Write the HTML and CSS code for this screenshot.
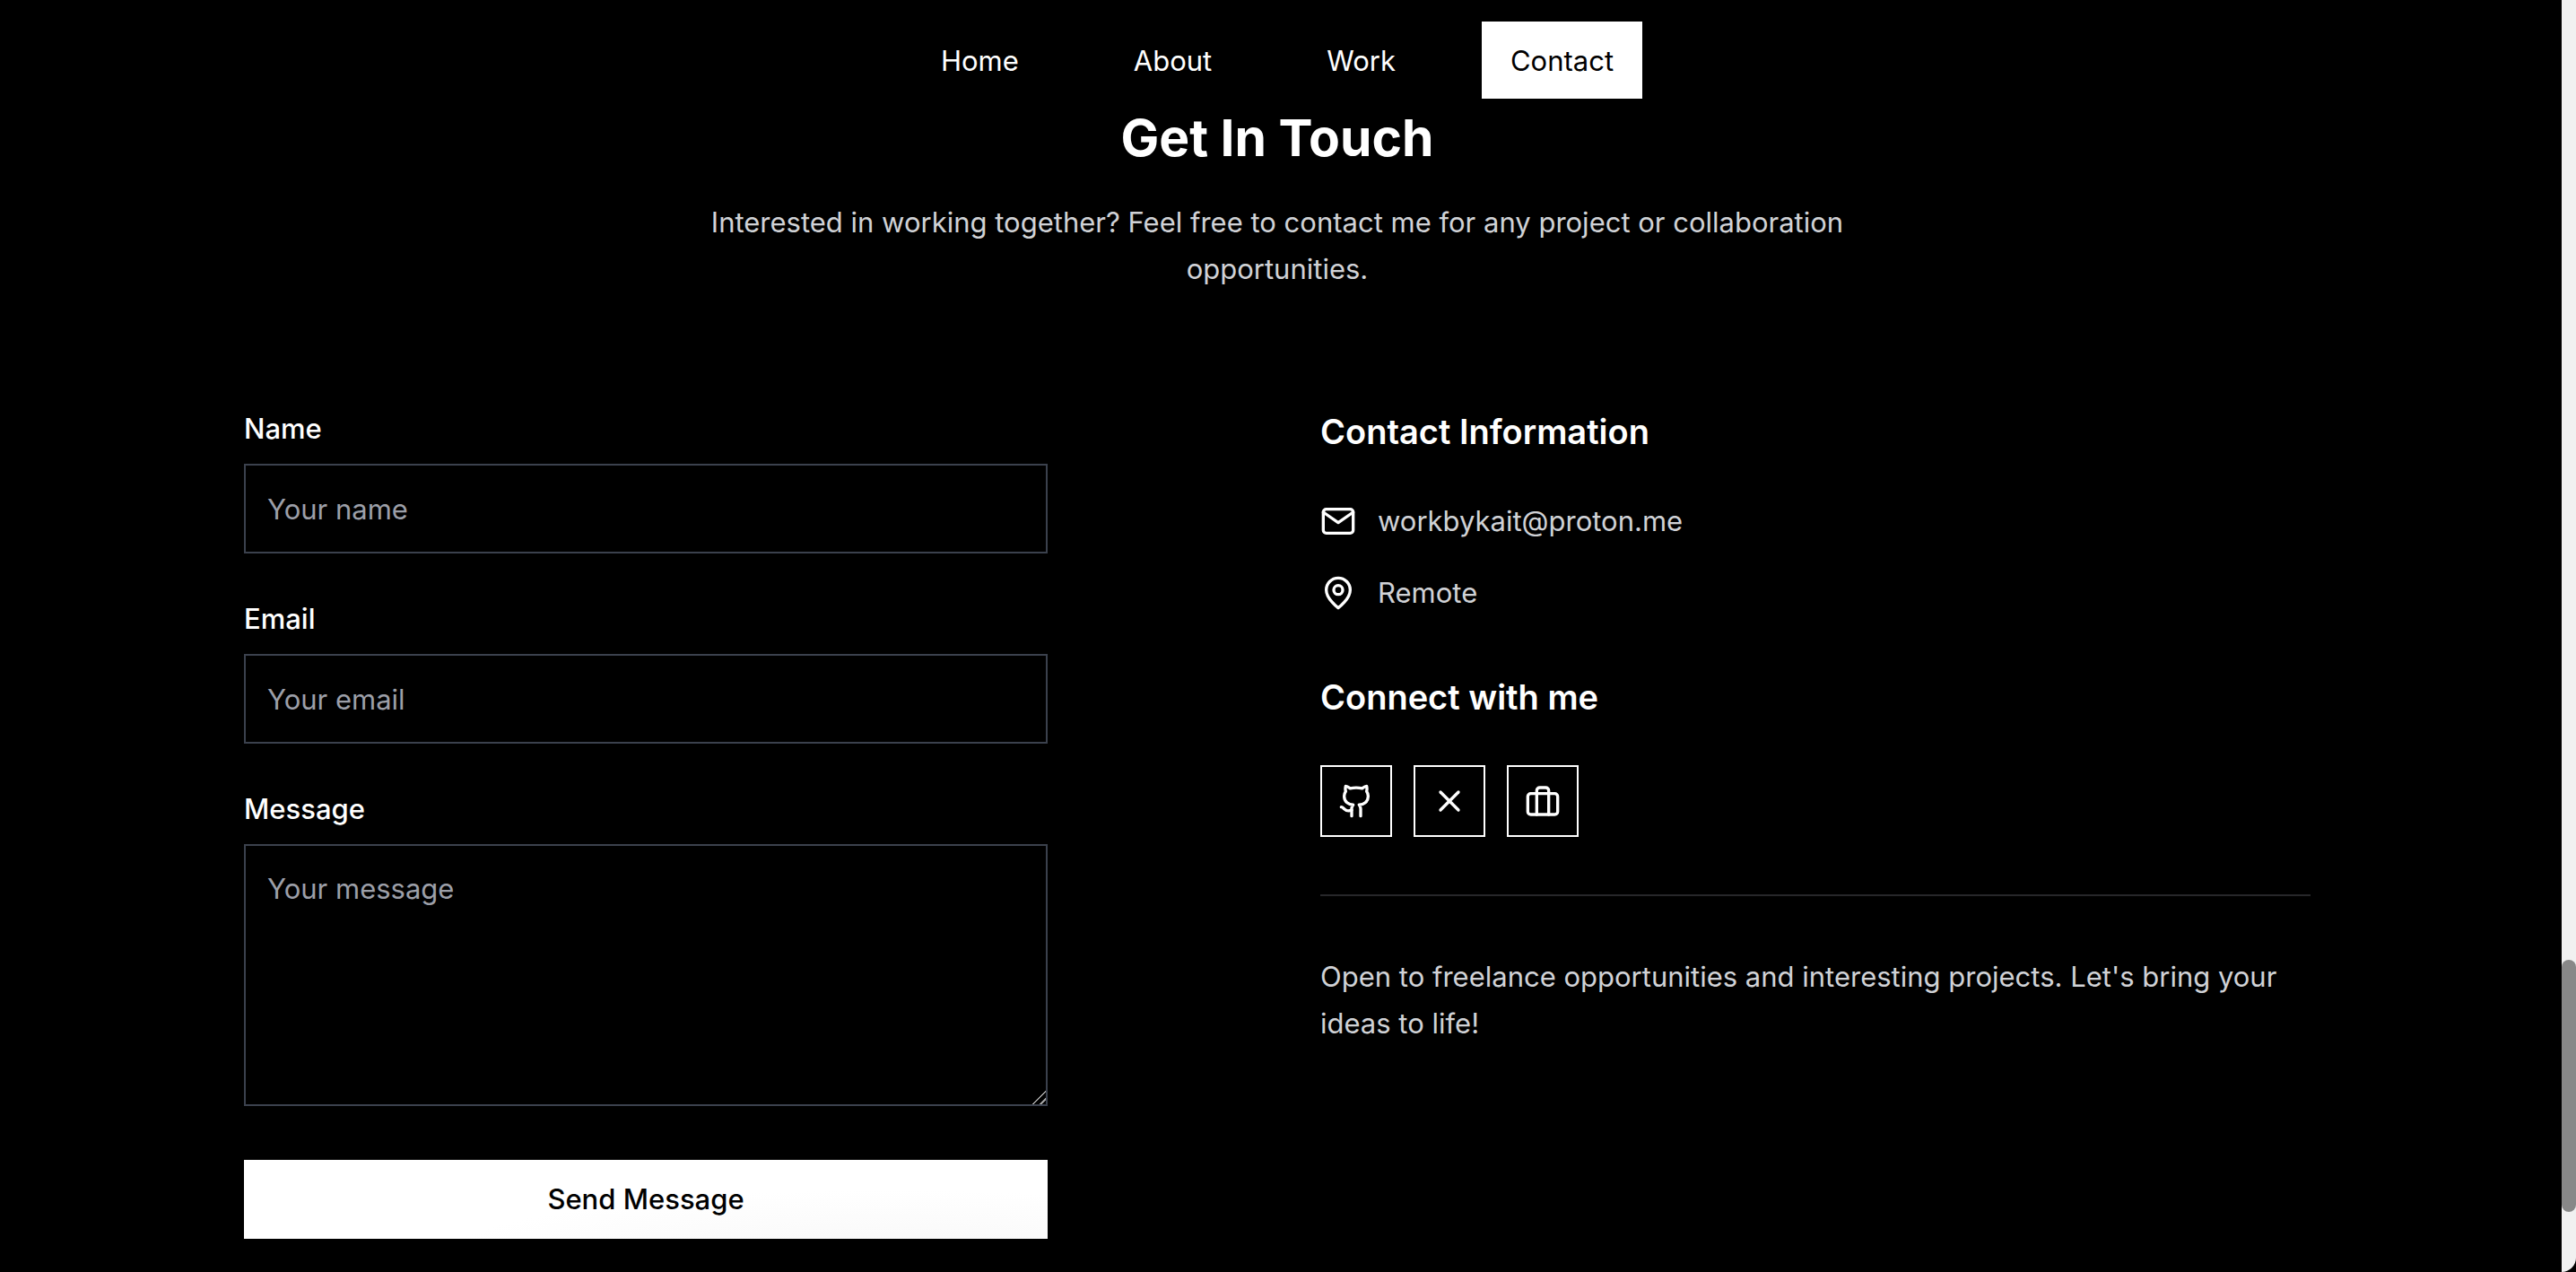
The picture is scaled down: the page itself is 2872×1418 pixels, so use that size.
FILE: index.html
```
<!DOCTYPE html>
<html lang="en">

<head>
    <meta charset="UTF-8">
    <meta name="viewport" content="width=device-width, initial-scale=1.0">
    <title>Contact</title>
    <link rel="stylesheet" href="styles.css">
</head>

<body>
    <div class="page">
        <header>
            <nav>
                <ul>
                    <li><a href="#home">Home</a></li>
                    <li><a href="#about">About</a></li>
                    <li><a href="#work">Work</a></li>
                    <li><a href="#contact" class="active">Contact</a></li>
                </ul>
            </nav>
        </header>

        <main class="contact" id="contact">
            <div class="intro">
                <h1>Get In Touch</h1>
                <p>Interested in working together? Feel free to contact me for any project or collaboration opportunities.</p>
            </div>

            <div class="columns">
                <form class="contact-form">
                    <div class="field">
                        <label for="name">Name</label>
                        <input type="text" id="name" name="name" placeholder="Your name">
                    </div>
                    <div class="field">
                        <label for="email">Email</label>
                        <input type="email" id="email" name="email" placeholder="Your email">
                    </div>
                    <div class="field">
                        <label for="message">Message</label>
                        <textarea id="message" name="message" rows="5" placeholder="Your message"></textarea>
                    </div>
                    <button type="submit" class="send-btn">Send Message</button>
                </form>

                <div class="info">
                    <h2>Contact Information</h2>
                    <ul class="details">
                        <li>
                            <svg class="icon" viewBox="0 0 24 24">
                                <rect x="2" y="4" width="20" height="16" rx="2" />
                                <path d="M22 6l-10 7L2 6" />
                            </svg>
                            <span>workbykait@proton.me</span>
                        </li>
                        <li>
                            <svg class="icon" viewBox="0 0 24 24">
                                <path d="M20 10c0 6-8 12-8 12s-8-6-8-12a8 8 0 0 1 16 0Z" />
                                <circle cx="12" cy="10" r="3" />
                            </svg>
                            <span>Remote</span>
                        </li>
                    </ul>

                    <h2>Connect with me</h2>
                    <div class="social">
                        <a href="#github" aria-label="GitHub">
                            <svg class="icon" viewBox="0 0 24 24">
                                <path d="M15 22v-4a4.8 4.8 0 0 0-1-3.5c3 0 6-2 6-5.5.08-1.25-.27-2.48-1-3.5.28-1.15.28-2.35 0-3.5 0 0-1 0-3 1.5-2.64-.5-5.36-.5-8 0C6 2 5 2 5 2c-.3 1.15-.3 2.35 0 3.5A5.403 5.403 0 0 0 4 9c0 3.5 3 5.5 6 5.5-.39.49-.68 1.05-.85 1.65-.17.6-.22 1.23-.15 1.85v4" />
                                <path d="M9 18c-4.51 2-5-2-7-2" />
                            </svg>
                        </a>
                        <a href="#x" aria-label="X">
                            <svg class="icon" viewBox="0 0 24 24">
                                <path d="M18 6L6 18" />
                                <path d="M6 6l12 12" />
                            </svg>
                        </a>
                        <a href="#portfolio" aria-label="Portfolio">
                            <svg class="icon" viewBox="0 0 24 24">
                                <rect x="2" y="7" width="20" height="14" rx="2" />
                                <path d="M16 21V5a2 2 0 0 0-2-2h-4a2 2 0 0 0-2 2v16" />
                            </svg>
                        </a>
                    </div>

                    <p class="note">Open to freelance opportunities and interesting projects. Let's bring your ideas to life!</p>
                </div>
            </div>
        </main>
    </div>

    <div class="scrollbar">
        <div class="thumb"></div>
    </div>
</body>

</html>
```

FILE: styles.css
```
* {
    margin: 0;
    padding: 0;
    box-sizing: border-box;
}
body {
    display: flex;
    min-height: 100vh;
    background-color: #000;
    color: white;
    font-family: Inter, "Liberation Sans", sans-serif;
    font-size: 31px;
    line-height: 52px;
}
ul {
    list-style: none;
}
.page {
    flex: 1;
    padding: 24px 8px 32px 0;
}

/* navigation */
nav ul {
    display: flex;
    justify-content: center;
    gap: 64px;
}
nav a {
    display: block;
    padding: 18px 32px 16px;
    color: white;
    text-decoration: none;
}
nav a.active {
    background-color: white;
    color: black;
}

/* contact section */
.contact {
    max-width: 2304px;
    margin: 8px auto 0;
}
.intro {
    max-width: 1344px;
    margin: 0 auto 127px;
    text-align: center;
}
.intro h1 {
    margin-bottom: 32px;
    font-size: 57px;
    font-weight: 700;
    line-height: 72px;
}
.intro p {
    color: #d0d2d6;
}
.columns {
    display: grid;
    grid-template-columns: 1fr 1fr;
    gap: 96px;
}

/* form */
.contact-form {
    display: flex;
    flex-direction: column;
    gap: 48px;
    max-width: 896px;
}
.field {
    display: flex;
    flex-direction: column;
    gap: 14px;
}
.field label {
    font-weight: 500;
    line-height: 50px;
}
.field input,
.field textarea {
    width: 100%;
    padding: 24px;
    border: 2px solid #3b414d;
    border-radius: 0;
    background-color: #000;
    color: white;
    font: inherit;
    line-height: 48px;
}
.field input {
    height: 100px;
}
.field textarea {
    display: block;
    height: 292px;
    resize: vertical;
}
.field textarea::-webkit-scrollbar {
    width: 16px;
    height: 16px;
}
.field textarea::-webkit-resizer {
    background: linear-gradient(135deg, transparent 10px, #a0a0a0 10px, #a0a0a0 12px, transparent 12px, transparent 16px, #a0a0a0 16px, #a0a0a0 18px, transparent 18px);
}
.field input::placeholder,
.field textarea::placeholder {
    color: #9c9fa8;
}
.send-btn {
    margin-top: 12px;
    padding: 20px;
    border: none;
    background: radial-gradient(ellipse at 80% 130%, #f7f7f7, white 50%);
    color: black;
    font: inherit;
    font-weight: 500;
    line-height: 48px;
    cursor: pointer;
}

/* contact info */
.info h2 {
    margin-bottom: 48px;
    font-size: 38px;
    font-weight: 600;
    line-height: 56px;
}
.icon {
    width: 40px;
    height: 40px;
    fill: none;
    stroke: white;
    stroke-width: 2;
    stroke-linecap: round;
    stroke-linejoin: round;
}
.details {
    display: flex;
    flex-direction: column;
    gap: 32px;
    margin-bottom: 64px;
    color: #d0d2d6;
    line-height: 48px;
}
.details li {
    display: flex;
    align-items: center;
    gap: 24px;
}
.social {
    display: flex;
    gap: 24px;
}
.social a {
    display: flex;
    align-items: center;
    justify-content: center;
    width: 80px;
    height: 80px;
    border: 2px solid white;
}
.note {
    margin-top: 64px;
    padding-top: 64px;
    border-top: 2px solid #27272a;
    color: #d0d2d6;
}

/* scrollbar */
.scrollbar {
    display: flex;
    flex-direction: column;
    justify-content: flex-end;
    width: 16px;
    padding-bottom: 67px;
    background-color: #f1f1f1;
    border-bottom-right-radius: 16px;
}
.thumb {
    height: 281px;
    border-radius: 8px;
    background-color: #888;
}
```
